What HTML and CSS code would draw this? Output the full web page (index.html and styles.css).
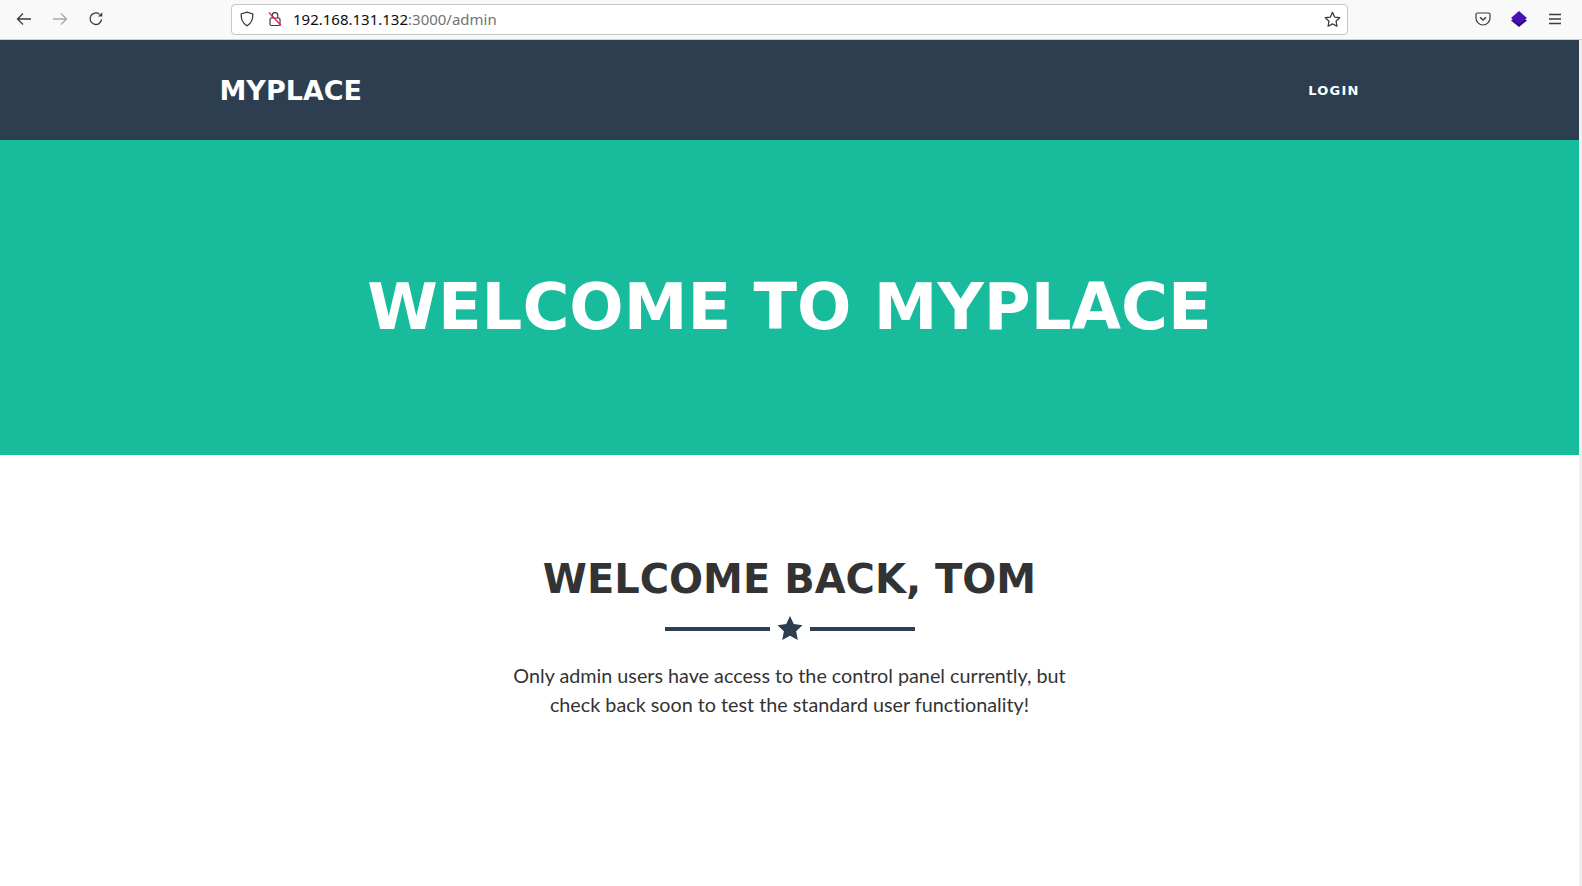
FILE: index.html
```html
<!DOCTYPE html>
<html lang="en">
<head>
  <meta charset="UTF-8">
  <title>MyPlace</title>
  <link rel="stylesheet" href="styles.css">
</head>
<body>

  <!-- Browser toolbar -->
  <div class="toolbar">
    <div class="tool-group">
      <button class="tool-btn">
        <svg width="16" height="16" viewBox="0 0 16 16" fill="none" stroke="#3b3b3f" stroke-width="1.3"><path d="M15 8H1.500M7 2.500L1.500 8 7 13.500"/></svg>
      </button>
      <button class="tool-btn">
        <svg width="16" height="16" viewBox="0 0 16 16" fill="none" stroke="#a9a9ab" stroke-width="1.3"><path d="M1 8h13.500M9 2.500L14.500 8 9 13.500"/></svg>
      </button>
      <button class="tool-btn">
        <svg width="16" height="16" viewBox="0 0 16 16" fill="none" stroke="#3b3b3f" stroke-width="1.3"><path d="M13.600 8.400A5.800 5.800 0 1 1 11.500 3.200"/><path d="M14.300 1.200v4.300h-4.300z" fill="#3b3b3f" stroke="none"/></svg>
      </button>
    </div>

    <div class="url-bar">
      <svg class="url-icon" width="16" height="16" viewBox="0 0 16 16" fill="none" stroke="#3b3b3f" stroke-width="1.3"><path d="M8 1.200l5.800 1.700c.2 4.800-1 9.400-5.800 11.900C3.200 12.300 2 7.700 2.200 2.900z"/></svg>
      <svg class="url-icon" width="16" height="16" viewBox="0 0 16 16" fill="none" stroke="#3b3b3f" stroke-width="1.2"><path d="M5.200 7V4.400a2.800 2.800 0 0 1 5.600 0V7"/><rect x="3" y="7" width="10" height="7.500" rx="1.500"/><path d="M2 1.500l12 13" stroke="#e0224e" stroke-width="1.300"/></svg>
      <span class="url-text"><span class="url-host">192.168.131.132</span>:3000/admin</span>
      <svg class="url-star" width="17" height="17" viewBox="0 0 16 16" fill="none" stroke="#3b3b3f" stroke-width="1.2" stroke-linejoin="round"><path d="M8 1.300l2 4.400 4.800.6-3.500 3.300.9 4.800L8 12.100l-4.200 2.300.9-4.800L1.200 6.300 6 5.700z"/></svg>
    </div>

    <div class="tool-group">
      <button class="tool-btn">
        <svg width="16" height="16" viewBox="0 0 16 16" fill="none" stroke="#3b3b3f" stroke-width="1.2"><path d="M2.500 2h11A1.500 1.500 0 0 1 15 3.500V7A7 7 0 0 1 1 7V3.500A1.500 1.500 0 0 1 2.500 2z"/><path d="M5 6.200L8 9l3-2.800" stroke-width="1.400"/></svg>
      </button>
      <button class="tool-btn">
        <svg width="16" height="16" viewBox="0 0 16 16"><path d="M8 4.500l8 5-8 6.500-8-6.500z" fill="#2a0a80"/><path d="M8 0l8 7-8 6-8-6z" fill="#4a0fb5"/></svg>
      </button>
      <button class="tool-btn">
        <svg width="16" height="16" viewBox="0 0 16 16" stroke="#3b3b3f" stroke-width="1.300"><path d="M2 3.500h12M2 8h12M2 12.500h12"/></svg>
      </button>
    </div>
  </div>

  <div class="page">
    <nav class="navbar">
      <div class="container nav-inner">
        <a class="brand" href="#">MYPLACE</a>
        <a class="nav-link" href="#">LOGIN</a>
      </div>
    </nav>

    <header class="hero">
      <h1>WELCOME TO MYPLACE</h1>
    </header>

    <section class="content">
      <h2>WELCOME BACK, TOM</h2>
      <div class="divider">
        <span class="divider-line"></span>
        <svg width="26" height="26" viewBox="0 .5 26 26"><path d="M13 .5l3.800 8.100 8.700 1.100-6.400 6.100 1.700 8.800-7.800-4.300-7.800 4.300 1.700-8.800L.5 9.700l8.700-1.100z" fill="#2c3e50"/></svg>
        <span class="divider-line"></span>
      </div>
      <p class="lead">Only admin users have access to the control panel currently, but<br>check back soon to test the standard user functionality!</p>
    </section>
  </div>

</body>
</html>
```

FILE: styles.css
```css
html, body {
  height: 100%;
}

body {
  margin: 0;
  display: flex;
  flex-direction: column;
  height: 886px;
  overflow: hidden;
  background-color: #fff;
  font-family: "Lato", sans-serif;
}

/* browser toolbar */
.toolbar {
  height: 38px;
  flex-shrink: 0;
  display: flex;
  align-items: center;
  background-color: #f9f9fa;
  border-bottom: 1px solid #cfcfd1;
  padding: 0 9px 1px 6px;
}

.tool-group {
  display: flex;
}

.tool-btn {
  width: 36px;
  height: 32px;
  padding: 0;
  display: flex;
  align-items: center;
  justify-content: center;
  background: none;
  border: none;
}

.url-bar {
  width: 1117px;
  height: 31px;
  margin-left: 117px;
  margin-right: auto;
  display: flex;
  align-items: center;
  gap: 12px;
  padding: 0 6px 0 7px;
  box-sizing: border-box;
  background-color: #fff;
  border: 1px solid #c6c6c8;
  border-radius: 4px;
}

.url-text {
  flex: 1;
  margin-left: -2px;
  font-family: "Noto Sans", sans-serif;
  font-size: 15px;
  color: #737373;
}

.url-host {
  color: #0c0c0d;
}

/* page */
.page {
  flex: 1;
  margin-right: 3px;
  box-shadow: 3px 0 0 #efefef;
}

.container {
  width: 1140px;
  margin: 0 auto;
}

.navbar {
  height: 100px;
  background-color: #2c3e50;
  display: flex;
  align-items: center;
}

.nav-inner {
  display: flex;
  justify-content: space-between;
  align-items: center;
}

.brand {
  font-family: "DejaVu Sans", sans-serif;
  font-weight: 700;
  font-size: 27px;
  color: #fff;
  text-decoration: none;
}

.nav-link {
  font-family: "DejaVu Sans", sans-serif;
  font-weight: 700;
  font-size: 13px;
  letter-spacing: 1.2px;
  color: #fff;
  text-decoration: none;
}

.hero {
  height: 315px;
  background-color: #18bc9c;
  display: flex;
  align-items: center;
  justify-content: center;
}

.hero h1 {
  margin: 0 0 -18px;
  font-family: "DejaVu Sans", sans-serif;
  font-weight: 700;
  font-size: 64px;
  color: #fff;
}

.content {
  padding-top: 97px;
  text-align: center;
}

.content h2 {
  margin: 0;
  font-family: "DejaVu Sans", sans-serif;
  font-weight: 700;
  font-size: 40px;
  line-height: 54px;
  color: #333;
}

.divider {
  display: flex;
  justify-content: center;
  align-items: center;
  gap: 7px;
  margin-top: 10px;
}

.divider-line {
  width: 105px;
  height: 4px;
  background-color: #2c3e50;
}

.lead {
  margin: 19px 0 0;
  font-size: 19.750px;
  font-variant-ligatures: none;
  line-height: 29px;
  color: #333;
}
```
